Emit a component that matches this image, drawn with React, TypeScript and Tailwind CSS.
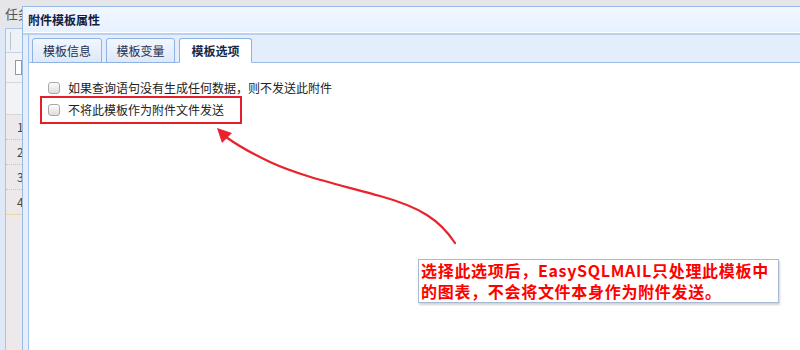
import type { ReactNode } from 'react'

const FONT = '"Noto Sans CJK SC", "Liberation Sans", sans-serif'

const TABS = [
  { label: '模板信息', width: 'w-[70px]', active: false },
  { label: '模板变量', width: 'w-[69px]', active: false },
  { label: '模板选项', width: 'w-[73px]', active: true },
]

function Checkbox() {
  return (
    <span className="block h-[12px] w-[12px] shrink-0 rounded-[3px] border border-[#a9a9a9] bg-gradient-to-b from-[#fdfdfd] to-[#dcdcdc]" />
  )
}

function Option({ children }: { children: ReactNode }) {
  return (
    <div className="flex h-[16px] items-center gap-[8px]">
      <Checkbox />
      <span className="text-[12px] leading-[16px] text-[#222]">{children}</span>
    </div>
  )
}

// the grid page that sits behind the dialog
function Backdrop() {
  return (
    <div className="flex h-full flex-col">
      <div className="flex h-[28px] items-center bg-[#e6e6ea] pl-[5px] text-[13px] text-[#555]">任务</div>
      <div className="flex flex-1">
        <div className="w-[6px] border-r border-[#a8c4e8] bg-[#dfe8f6]" />
        <div className="flex w-[16px] flex-col border-t border-[#a8c4e8] bg-[#ede9eb]">
          <div className="h-[24px] border-b border-[#c8d4e4] bg-[#eef1f6] pl-[4px]">
            <div className="mt-[3px] h-[18px] border-l border-[#b9c4d4]" />
          </div>
          <div className="flex h-[30px] items-center border-b border-[#d6d6dc] bg-[#f3f3f5] pl-[9px]">
            <span className="block h-[15px] w-[8px] border border-[#999] bg-white" />
          </div>
          <div className="h-[32px] border-b border-[#d6d6dc] bg-[#f3f3f5]" />
          {['1', '2', '3', '4'].map((n, i) => (
            <div
              key={n}
              className={`flex h-[25px] items-center pl-[11px] text-[12px] text-[#444] ${
                i < 3 ? 'border-b border-dotted border-[#c4c4c4]' : 'border-b border-[#e8d8a8]'
              }`}
            >
              {n}
            </div>
          ))}
        </div>
      </div>
    </div>
  )
}

function Dialog() {
  return (
    <div className="absolute left-[22px] top-[6px] right-[-10px] bottom-[-10px] flex flex-col border border-[#99bbe8] bg-[#e6eefb]">
      <div className="flex h-[26px] items-center border-b border-white bg-gradient-to-b from-[#f1f7ff] to-[#e7f1ff] pl-[5px] text-[12px] font-bold text-[#12203c]">
        附件模板属性
      </div>
      <div className="flex flex-1 flex-col border-t-2 border-[#b9d0ee] pl-[5px]">
        <div className="flex flex-1 flex-col border-l border-[#a3c3ec]">
          <div className="flex h-[28px] items-end gap-[4px] border-b border-[#99bbe8] bg-[#e4edfc] pl-[3px]">
            {TABS.map((t) => (
              <div
                key={t.label}
                className={`${t.width} mb-[-1px] flex h-[25px] items-center justify-center rounded-t-[3px] border border-[#8db2e3] text-[12px] ${
                  t.active
                    ? 'border-b-white bg-white font-bold text-[#15284a]'
                    : 'bg-gradient-to-b from-[#f3f7fd] to-[#dde8f8] text-[#1f2f4f]'
                }`}
              >
                {t.label}
              </div>
            ))}
          </div>
          <div className="flex flex-1 flex-col bg-white pl-[11px] pt-[17px]">
            <div className="pl-[8px]">
              <Option>如果查询语句没有生成任何数据，则不发送此附件</Option>
            </div>
            <div className="flex h-[28px] w-[202px] items-center border-2 border-[#e3202a] pl-[6px]">
              <Option>不将此模板作为附件文件发送</Option>
            </div>
          </div>
        </div>
      </div>
    </div>
  )
}

export default function App() {
  return (
    <div className="relative h-[350px] w-[800px] overflow-hidden bg-[#dfe8f6]" style={{ fontFamily: FONT }}>
      <Backdrop />
      <Dialog />
      <svg className="absolute left-0 top-0" width="800" height="350" viewBox="0 0 800 350">
        <path
          d="M455,243 C440,220 420,207 380,196 C340,185 300,176 270,162 C255,155 240,147 226,137"
          fill="none"
          stroke="#e8232c"
          strokeWidth="2.2"
          strokeLinecap="round"
        />
        <polygon points="217,128 222,143 232,133" fill="#e8232c" />
      </svg>
      <div className="absolute left-[418px] top-[259px] h-[44px] w-[361px] border border-[#aab9d2] bg-white px-[2px] text-[16px] font-bold leading-[21px] tracking-[0.7px] text-[#ff0000] shadow-[1px_2px_2px_rgba(0,0,0,0.18)]">
        <div>选择此选项后，EasySQLMAIL只处理此模板中</div>
        <div>的图表，不会将文件本身作为附件发送。</div>
      </div>
    </div>
  )
}
